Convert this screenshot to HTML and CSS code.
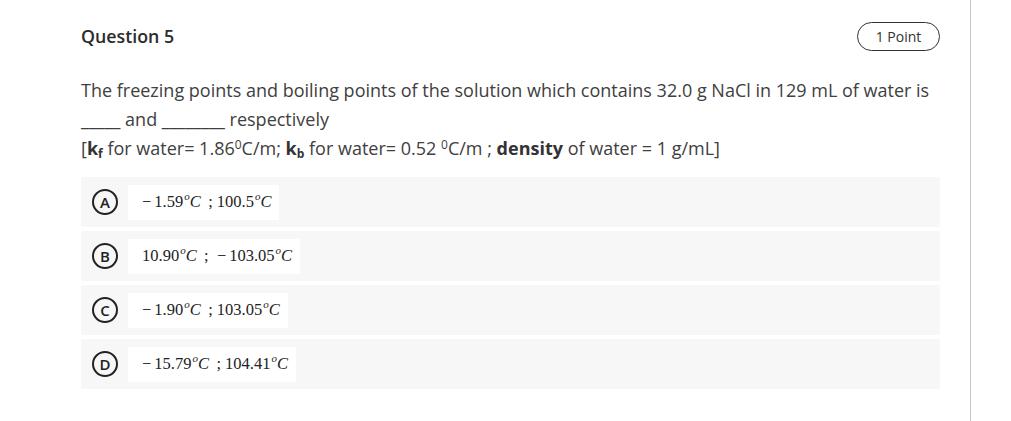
FILE: index.html
```html
<!DOCTYPE html>
<html>
<head>
<meta charset="utf-8">
<link rel="stylesheet" href="styles.css">
</head>
<body>
<div class="page">
  <div class="header">
    <div class="title">Question 5</div>
    <div class="points">1 Point</div>
  </div>
  <div class="question">
    <div>The freezing points and boiling points of the solution which contains 32.0 g NaCl in 129 mL of water is</div>
    <div>_____ and ________ respectively</div>
    <div>[<b>k<sub>f</sub></b> for water= 1.86<sup>0</sup>C/m; <b>k<sub>b</sub></b> for water= 0.52 <sup>0</sup>C/m ; <b>density</b> of water = 1 g/mL]</div>
  </div>
  <div class="options">
    <div class="option">
      <span class="letter">A</span>
      <span class="math"><span class="expr"><span class="op">&minus;</span>1.59<sup><i>o</i></sup><i>C</i>&thinsp; ; 100.5<sup><i>o</i></sup><i>C</i></span></span>
    </div>
    <div class="option">
      <span class="letter">B</span>
      <span class="math"><span class="expr">10.90<sup><i>o</i></sup><i>C</i>&thinsp; ;&nbsp; <span class="op">&minus;</span>103.05<sup><i>o</i></sup><i>C</i></span></span>
    </div>
    <div class="option">
      <span class="letter">C</span>
      <span class="math"><span class="expr"><span class="op">&minus;</span>1.90<sup><i>o</i></sup><i>C</i>&thinsp; ; 103.05<sup><i>o</i></sup><i>C</i></span></span>
    </div>
    <div class="option">
      <span class="letter">D</span>
      <span class="math"><span class="expr"><span class="op">&minus;</span>15.79<sup><i>o</i></sup><i>C</i>&thinsp; ; 104.41<sup><i>o</i></sup><i>C</i></span></span>
    </div>
  </div>
</div>
</body>
</html>
```

FILE: styles.css
```css
html, body {
  margin: 0;
  padding: 0;
  background: #ffffff;
}
body {
  font-family: "Open Sans", "Liberation Sans", sans-serif;
  color: #333333;
}
.page {
  box-sizing: border-box;
  width: 971px;
  min-height: 421px;
  border-right: 1px solid #c8c8c8;
  padding: 21px 30px 0 81px;
}
.header {
  display: flex;
  justify-content: space-between;
  align-items: center;
  height: 30px;
}
.title {
  font-size: 17.8px;
  font-weight: 600;
  color: #2b2b2b;
}
.points {
  box-sizing: border-box;
  height: 29px;
  width: 83px;
  border: 1px solid #333;
  border-radius: 15px;
  font-size: 14px;
  display: flex;
  align-items: center;
  justify-content: center;
  color: #333;
}
.question {
  margin-top: 25px;
  font-size: 18px;
  line-height: 29px;
  color: #404040;
}
.question b {
  color: #333;
}
.question sub {
  font-size: 12px;
  vertical-align: -3px;
  line-height: 0;
}
.question sup {
  font-size: 12px;
  vertical-align: 6px;
  line-height: 0;
}
.options {
  margin-top: 14px;
  display: flex;
  flex-direction: column;
  gap: 4px;
}
.option {
  height: 50px;
  background: #f7f7f7;
  border-radius: 2px;
  display: flex;
  align-items: center;
  padding-left: 11px;
}
.letter {
  box-sizing: border-box;
  width: 26px;
  height: 26px;
  border: 2px solid #222;
  border-radius: 50%;
  display: flex;
  align-items: center;
  justify-content: center;
  font-size: 15px;
  font-weight: 600;
  color: #222;
}
.math {
  margin-left: 10px;
  background: #ffffff;
  height: 35px;
  display: flex;
  align-items: center;
  padding: 0 8px 0 14px;
}
.expr {
  font-family: "Liberation Serif", "DejaVu Serif", serif;
  font-size: 16.5px;
  color: #222;
  white-space: pre;
}
.op {
  margin-right: 3px;
}
.expr sup {
  font-size: 11px;
  vertical-align: 7px;
  line-height: 0;
  margin-left: 1px;
}
```
